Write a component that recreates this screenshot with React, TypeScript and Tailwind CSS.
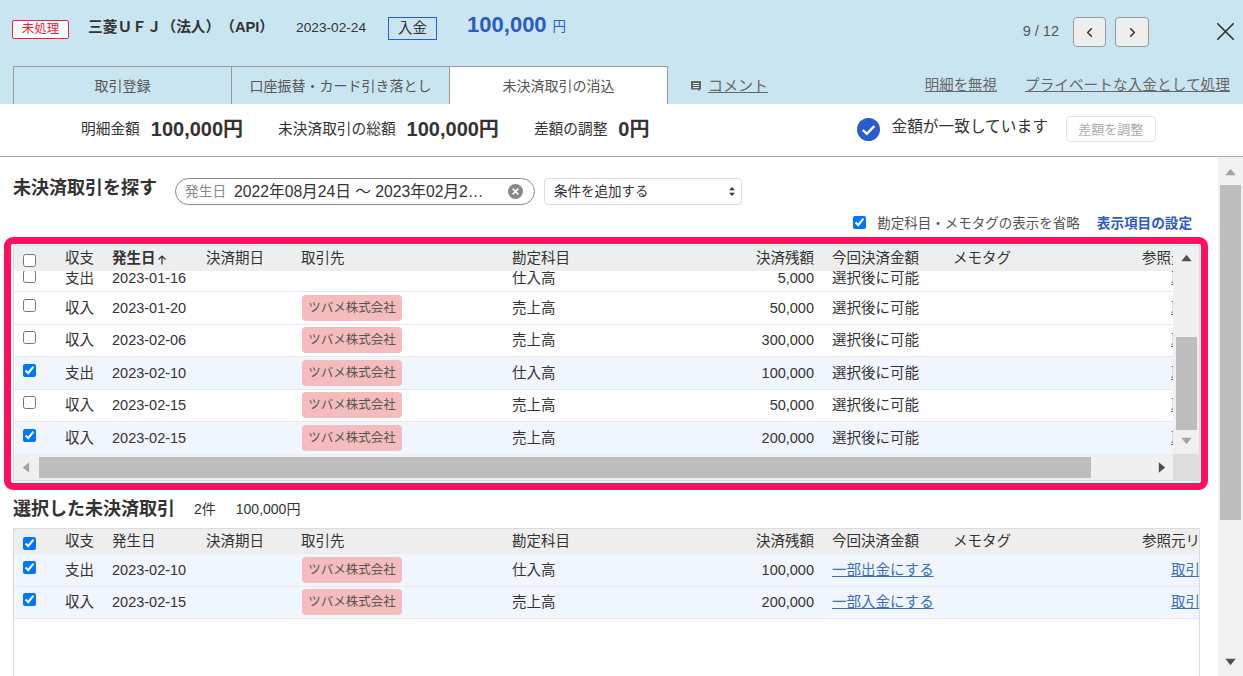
import { ChevronLeft, ChevronRight, X } from "lucide-react"

const font = { fontFamily: '"Liberation Sans", "Noto Sans CJK JP", sans-serif' }

const searchRows = [
  { type: "収入", date: "2023-01-20", account: "売上高", amount: "50,000", checked: false },
  { type: "収入", date: "2023-02-06", account: "売上高", amount: "300,000", checked: false },
  { type: "支出", date: "2023-02-10", account: "仕入高", amount: "100,000", checked: true },
  { type: "収入", date: "2023-02-15", account: "売上高", amount: "50,000", checked: false },
  { type: "収入", date: "2023-02-15", account: "売上高", amount: "200,000", checked: true },
]

const selectedRows = [
  { type: "支出", date: "2023-02-10", account: "仕入高", amount: "100,000", action: "一部出金にする" },
  { type: "収入", date: "2023-02-15", account: "売上高", amount: "200,000", action: "一部入金にする" },
]

const gridCols = "grid grid-cols-[51px_47px_94px_95px_211px_188px_132px_121px_189px_100px] w-[1228px] items-center"

function Arrow({ dir, className }: { dir: "up" | "down" | "left" | "right"; className: string }) {
  const points = {
    up: "0,9 6.5,1 13,9",
    down: "0,1 6.5,9 13,1",
    left: "9,0 1,6.5 9,13",
    right: "1,0 9,6.5 1,13",
  }[dir]
  const box = dir === "up" || dir === "down" ? "0 0 13 10" : "0 0 10 13"
  return (
    <svg viewBox={box} className={className} fill="currentColor">
      <polygon points={points} />
    </svg>
  )
}

function Check({ checked = false, className = "" }: { checked?: boolean; className?: string }) {
  return <input type="checkbox" defaultChecked={checked} className={`m-0 h-[13px] w-[13px] block ${className}`} />
}

function Tag() {
  return (
    <span className="flex h-[26px] w-[100px] items-center justify-center rounded bg-[#f4bcbc] text-[12.5px] text-[#555]">
      ツバメ株式会社
    </span>
  )
}

function HeaderRow({ checked, sorted, last }: { checked: boolean; sorted?: boolean; last: string }) {
  return (
    <div className={`${gridCols} h-[25px] bg-[#eeeeee]`}>
      <div className="pl-[9px] pt-[3px]">
        <Check checked={checked} />
      </div>
      <div>収支</div>
      {sorted ? (
        <div className="flex items-center font-bold">
          発生日
          <svg viewBox="0 0 10 10" className="ml-[1px] mt-[2px] h-[10px] w-[10px]" fill="none" stroke="#333" strokeWidth="1.2">
            <path d="M5 9.5V1M1.5 4.5 5 1l3.5 3.5" />
          </svg>
        </div>
      ) : (
        <div>発生日</div>
      )}
      <div>決済期日</div>
      <div>取引先</div>
      <div>勘定科目</div>
      <div className="pr-[18px] text-right">決済残額</div>
      <div>今回決済金額</div>
      <div>メモタグ</div>
      <div className="whitespace-nowrap">{last}</div>
    </div>
  )
}

function ScrollTrackV() {
  return (
    <div className="flex h-full w-[26px] shrink-0 flex-col items-center bg-[#f0f0f0]">
      <Arrow dir="up" className="mt-[8px] h-[8px] w-[13px] text-[#505050]" />
      <div className="mt-[75px] h-[93px] w-[21px] bg-[#bdbdbd]" />
      <Arrow dir="down" className="mt-[7px] h-[8px] w-[13px] text-[#a3a3a3]" />
    </div>
  )
}

export default function App() {
  return (
    <div style={font} className="flex h-screen w-full flex-col overflow-hidden bg-white text-[14.5px] leading-none text-[#333]">
      {/* header */}
      <div className="h-[104px] shrink-0 bg-[#cae5f2]">
        <div className="flex h-[66px] items-start">
          <span className="ml-3 mt-[20px] flex h-[19px] w-[57px] items-center justify-center rounded-[2px] border border-[#e8213a] bg-white text-[12.5px] text-[#e8213a]">
            未処理
          </span>
          <span className="ml-[19px] mt-[20px] text-[14.7px] font-bold whitespace-nowrap [text-spacing-trim:space-all]">三菱ＵＦＪ（法人）（API）</span>
          <span className="ml-[22px] mt-[21px] text-[13.7px]">2023-02-24</span>
          <span className="ml-[22px] mt-[17px] flex h-[23px] w-[49px] items-center justify-center border border-[#2a5bd0] text-[14.5px]">
            入金
          </span>
          <span className="ml-[30px] mt-[14px] text-[22px] font-bold text-[#2a5bc8]">100,000</span>
          <span className="ml-[6px] mt-[20px] text-[13.5px] text-[#2a5bc8]">円</span>
          <span className="ml-auto mt-[24px] text-[14.5px] text-[#555]">9 / 12</span>
          <button className="ml-[14px] mt-[17px] flex h-[30px] w-[33px] items-center justify-center rounded border border-[#999] bg-[#eeeeee]">
            <ChevronLeft size={15} strokeWidth={2.5} />
          </button>
          <button className="ml-[9px] mt-[17px] flex h-[30px] w-[34px] items-center justify-center rounded border border-[#999] bg-[#eeeeee]">
            <ChevronRight size={15} strokeWidth={2.5} />
          </button>
          <div className="ml-[61px] mr-[2px] mt-[16px]">
            <X size={31} strokeWidth={1.3} className="text-[#333]" />
          </div>
        </div>
        <div className="flex h-[38px] items-end pl-[13px]">
          <div className="flex h-[38px] w-[219px] items-center justify-center border-x border-t border-[#999] text-[14px] text-[#555]">取引登録</div>
          <div className="flex h-[38px] w-[218px] items-center justify-center border-r border-t border-[#999] text-[14px] text-[#555]">口座振替・カード引き落とし</div>
          <div className="flex h-[38px] w-[218px] items-center justify-center border-r border-t border-[#999] bg-white text-[14px] text-[#555]">未決済取引の消込</div>
          <div className="ml-[22px] flex h-[38px] items-center text-[#666]">
            <svg viewBox="0 0 12 12" className="mr-[6px] mt-[2px] h-[12px] w-[12px]">
              <path d="M1 1h10v8.5h-1.5V11.5L7.5 9.5H1z" fill="#666" />
              <path d="M3 3.5h6M3 5.5h6M3 7.5h6" stroke="#cae5f2" strokeWidth="1" />
            </svg>
            <span className="text-[15px] underline">コメント</span>
          </div>
          <span className="ml-auto flex h-[38px] items-center text-[14.4px] text-[#666] underline">明細を無視</span>
          <span className="ml-[28px] mr-[13px] flex h-[38px] items-center text-[14.7px] text-[#666] underline">プライベートな入金として処理</span>
        </div>
      </div>

      {/* summary */}
      <div className="flex h-[53px] shrink-0 items-center border-b border-[#aaa] pb-[2px] pl-[81px] text-[14.7px]">
        <span>明細金額</span>
        <span className="ml-[11px] text-[20px] font-bold">100,000円</span>
        <span className="ml-[35px]">未決済取引の総額</span>
        <span className="ml-[11px] text-[20px] font-bold">100,000円</span>
        <span className="ml-[35px]">差額の調整</span>
        <span className="ml-[11px] text-[20px] font-bold">0円</span>
        <svg viewBox="0 0 24 24" className="ml-[208px] h-[23px] w-[23px]">
          <circle cx="12" cy="12" r="12" fill="#2a5bd0" />
          <path d="M6 12.5l4.2 4L18 8.5" fill="none" stroke="#fff" strokeWidth="2.4" />
        </svg>
        <span className="ml-[11px] -mt-[4px] text-[15.7px]">金額が一致しています</span>
        <span className="ml-[18px] flex h-[26px] w-[90px] items-center justify-center rounded border border-[#e5e5e5] text-[13px] text-[#aaa]">差額を調整</span>
      </div>

      <div className="flex min-h-0 flex-1">
        <div className="min-w-0 flex-1">
          {/* search */}
          <div className="mt-[21px] flex items-start pl-[13px]">
            <h2 className="mt-[1px] w-[162px] text-[18px] font-bold">未決済取引を探す</h2>
            <div className="flex h-[27px] w-[360px] items-center rounded-full border border-[#888] pl-[9px]">
              <span className="text-[13.7px] text-[#888]">発生日</span>
              <span className="ml-[8px] w-[274px] whitespace-nowrap text-[15.7px]">2022年08月24日 ～ 2023年02月2…</span>
              <svg viewBox="0 0 16 16" className="h-[15px] w-[15px]">
                <circle cx="8" cy="8" r="8" fill="#888" />
                <path d="M5 5l6 6M11 5l-6 6" stroke="#fff" strokeWidth="1.8" />
              </svg>
            </div>
            <div className="ml-[9px] flex h-[27px] w-[198px] items-center justify-between rounded border border-[#ddd] pl-[9px] pr-[6px] text-[13.5px]">
              条件を追加する
              <svg viewBox="0 0 7 11" className="h-[9px] w-[6px]" fill="#333">
                <path d="M3.5 0 7 4H0zM3.5 11 0 7h7z" />
              </svg>
            </div>
          </div>
          <div className="mt-[10px] flex h-[15px] items-center justify-end pr-[26px]">
            <Check checked />
            <span className="ml-[11px] mt-[2px] text-[13.5px] text-[#555]">勘定科目・メモタグの表示を省略</span>
            <span className="ml-[17px] mt-[2px] text-[13.6px] font-bold text-[#2a5bc8]">表示項目の設定</span>
          </div>

          {/* search results, highlighted */}
          <div className="ml-1 mt-[7px] h-[253px] w-[1204px] rounded-[9px] border-[7px] border-[#ff0f5c] bg-white pb-[1px] pl-[2px] pr-[1px] pt-[1px]">
            <div className="flex h-[236px] flex-col border border-[#dcdcdc]">
              <div className="flex h-[208px] shrink-0">
                <div className="min-w-0 flex-1 overflow-hidden">
                  <HeaderRow checked={false} sorted last="参照元リンク" />
                  <div className="h-[21px] overflow-hidden border-b border-[#e8e8e8]">
                    <div className={`${gridCols} -mt-[9px] h-[33px]`}>
                      <div className="pl-[9px]">
                        <Check className="-mt-[5px]" />
                      </div>
                      <div>支出</div>
                      <div>2023-01-16</div>
                      <div />
                      <div />
                      <div>仕入高</div>
                      <div className="pr-[18px] text-right">5,000</div>
                      <div>選択後に可能</div>
                      <div />
                      <div className="pl-[29px] text-[#3a70c0] underline">取引</div>
                    </div>
                  </div>
                  {searchRows.map((row, i) => (
                    <div key={i} className={`${gridCols} h-[32.5px] border-b border-[#e8e8e8] ${row.checked ? "bg-[#f1f5fd]" : ""}`}>
                      <div className="pl-[9px]">
                        <Check checked={row.checked} className="-mt-[5px]" />
                      </div>
                      <div>{row.type}</div>
                      <div>{row.date}</div>
                      <div />
                      <div className="pl-[1px]">
                        <Tag />
                      </div>
                      <div>{row.account}</div>
                      <div className="pr-[18px] text-right">{row.amount}</div>
                      <div>選択後に可能</div>
                      <div />
                      <div className="pl-[29px] text-[#3a70c0] underline">取引</div>
                    </div>
                  ))}
                </div>
                <ScrollTrackV />
              </div>
              <div className="flex h-[26px] shrink-0">
                <div className="flex flex-1 items-center bg-[#f0f0f0]">
                  <Arrow dir="left" className="ml-[8px] h-[13px] w-[8px] text-[#a3a3a3]" />
                  <div className="ml-[9px] h-[21px] w-[1052px] bg-[#bdbdbd]" />
                  <Arrow dir="right" className="ml-[67px] h-[13px] w-[8px] text-[#505050]" />
                </div>
                <div className="w-[26px] bg-[#dcdcdc]" />
              </div>
            </div>
          </div>

          {/* selected */}
          <div className="mt-[10px] flex h-[18px] items-center pl-[13px]">
            <h2 className="text-[18px] font-bold">選択した未決済取引</h2>
            <span className="ml-[19px] text-[14px]">2件</span>
            <span className="ml-[20px] text-[14px]">100,000円</span>
          </div>
          <div className="ml-[13px] mt-[10px] h-[200px] w-[1187px] overflow-hidden border border-[#dcdcdc]">
            <HeaderRow checked last="参照元リンク" />
            {selectedRows.map((row, i) => (
              <div key={i} className={`${gridCols} h-[32.5px] border-b border-[#e8e8e8] bg-[#f1f5fd]`}>
                <div className="pl-[9px]">
                  <Check checked className="-mt-[5px]" />
                </div>
                <div>{row.type}</div>
                <div>{row.date}</div>
                <div />
                <div className="pl-[1px]">
                  <Tag />
                </div>
                <div>{row.account}</div>
                <div className="pr-[18px] text-right">{row.amount}</div>
                <div className="whitespace-nowrap text-[#3a70c0] underline">{row.action}</div>
                <div />
                <div className="pl-[29px] whitespace-nowrap text-[#3a70c0] underline">取引先</div>
              </div>
            ))}
          </div>
        </div>

        {/* page scrollbar */}
        <div className="flex w-[25px] shrink-0 flex-col items-center bg-[#f1f1f1]">
          <Arrow dir="up" className="mt-[11px] h-[8px] w-[13px] text-[#a3a3a3]" />
          <div className="mt-[9px] h-[335px] w-[21px] bg-[#bdbdbd]" />
          <Arrow dir="down" className="mb-[10px] mt-auto h-[8px] w-[13px] text-[#505050]" />
        </div>
      </div>
    </div>
  )
}
